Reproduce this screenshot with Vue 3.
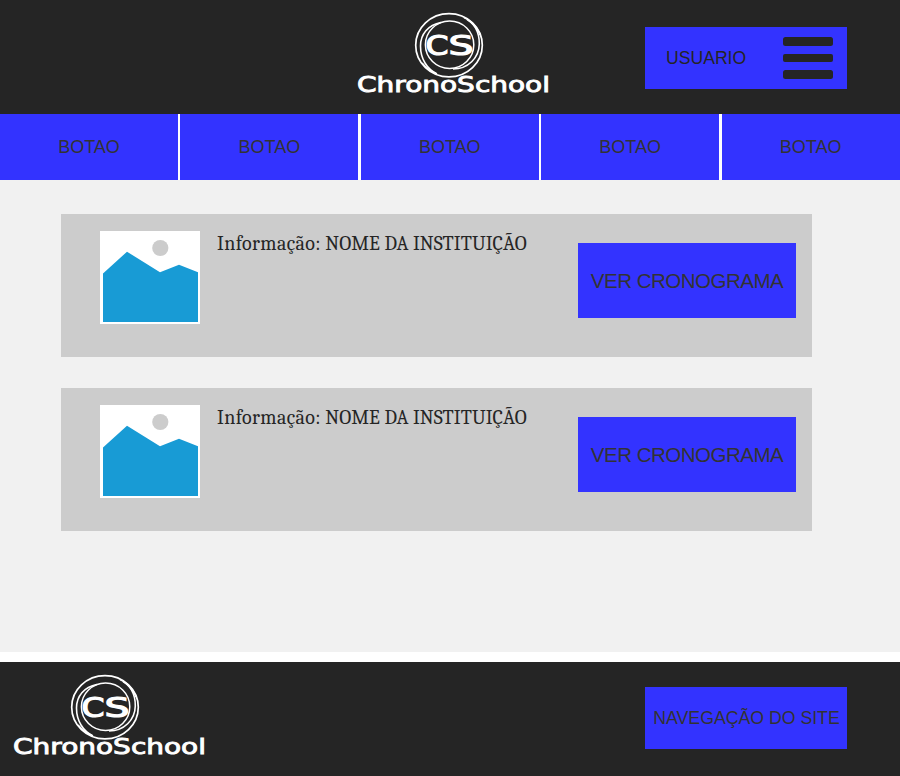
<script setup>
import { h } from 'vue'

const tabs = ['BOTAO', 'BOTAO', 'BOTAO', 'BOTAO', 'BOTAO']
const institutions = [
  { id: 1, name: 'NOME DA INSTITUIÇÃO' },
  { id: 2, name: 'NOME DA INSTITUIÇÃO' },
]

const ring = (cx, cy, rx, ry, w) =>
  h('ellipse', { cx, cy, rx, ry, fill: 'none', stroke: '#fff', 'stroke-width': w })

const arc = (d, w) =>
  h('path', { d, fill: 'none', stroke: '#fff', 'stroke-width': w })

const label = (x, y, size, length, text, outline) =>
  h('text', {
    x, y, fill: '#fff', stroke: '#fff', 'stroke-width': outline, 'font-size': size,
    'font-family': '"DejaVu Sans", sans-serif',
    textLength: length, lengthAdjust: 'spacingAndGlyphs',
  }, text)

// Brand mark: interlaced rings around the initials, with the name underneath.
const BrandLogo = () =>
  h('svg', { width: 194, height: 84, viewBox: '0 0 194 84', role: 'img' }, [
    ring(92, 33.2, 33.3, 31.6, 1.7),
    ring(92.6, 32.8, 24.2, 23.7, 1.5),
    arc('M107 5.5C117 10 122.5 20 122.3 32C122 46 111 57 96 57', 1.6),
    arc('M84 10.5C71 13 63.5 22 63.5 34C63.5 47 70 57 80 62', 1.6),
    arc('M110 7.5Q119 12.5 123 23M65 51Q71 58 79 61.5', 1.5),
    label(68.5, 43, 26.5, 23, 'C', 1.2),
    label(91.5, 43, 26.5, 25, 'S', 1.2),
    label(0, 80.3, 22, 193, 'ChronoSchool', 0.9),
  ])
</script>

<template>
  <div class="page">
    <header class="bar">
      <BrandLogo class="logo" />
      <button class="box user">
        <span>USUARIO</span>
        <svg width="50" height="42" viewBox="0 0 50 42">
          <rect width="50" height="9" rx="2.5" />
          <rect y="17" width="50" height="8" rx="2" />
          <rect y="33" width="50" height="9" rx="2.5" />
        </svg>
      </button>
    </header>
    <nav class="tabs">
      <button v-for="(tab, i) in tabs" :key="i" class="tab">{{ tab }}</button>
    </nav>
    <main class="content">
      <article v-for="item in institutions" :key="item.id" class="card">
        <svg class="picture" width="100" height="93" viewBox="0 0 100 93">
          <rect width="100" height="93" fill="#fff" />
          <circle cx="60.3" cy="17" r="8.1" fill="#ccc" />
          <path d="M3 42.5 27 20.7 60 41.2 79 33.8 98 41.3V91H3Z" fill="#189bd5" />
        </svg>
        <p class="info"><span class="info-label">Informação: </span>{{ item.name }}</p>
        <button class="schedule">VER CRONOGRAMA</button>
      </article>
    </main>
    <footer class="bar foot">
      <BrandLogo class="logo" />
      <button class="box site">NAVEGAÇÃO DO SITE</button>
    </footer>
  </div>
</template>

<style>
body {
  margin: 0;
  background: #fff;
}
</style>

<style scoped>
.page {
  width: 900px;
  height: 776px;
  display: flex;
  flex-direction: column;
  overflow: hidden;
  font-family: "Liberation Sans", Arial, sans-serif;
}
button {
  border: 0;
  border-radius: 0;
  margin: 0;
  padding: 0;
  background: #33f;
  color: #333;
  font-family: inherit;
  font-size: 18px;
  white-space: nowrap;
}
.bar {
  height: 114px;
  flex: none;
  box-sizing: border-box;
  padding: 12px 53px 0 357px;
  background: #252525;
  display: flex;
  justify-content: space-between;
  align-items: flex-start;
}
.logo {
  flex: none;
  overflow: visible;
}
.box {
  width: 202px;
  height: 62px;
  margin-top: 15px;
}
.user {
  display: flex;
  align-items: center;
  justify-content: space-between;
  padding: 0 14px 0 21px;
  color: #252525;
  font-size: 17.6px;
}
.user svg {
  fill: #252525;
}
.tabs {
  display: flex;
  gap: 2.4px;
  height: 66px;
  flex: none;
}
.tab {
  flex: 0 0 178px;
}
.content {
  height: 472px;
  flex: none;
  box-sizing: border-box;
  padding: 34px 88px 0 61px;
  background: #f1f1f1;
  display: flex;
  flex-direction: column;
  gap: 31px;
}
.card {
  height: 143px;
  box-sizing: border-box;
  padding: 17px 16px 0 39px;
  background: #ccc;
  display: flex;
  align-items: flex-start;
}
.picture {
  flex: none;
}
.info {
  flex: 1;
  margin: 0 0 0 17px;
  color: #252525;
  font: 20px/25px Cambria, Caladea, "DejaVu Serif Condensed", serif;
  letter-spacing: 0.05px;
  white-space: nowrap;
}
.info-label {
  letter-spacing: 0.35px;
}
.schedule {
  width: 218px;
  height: 75px;
  margin-top: 12px;
  padding-top: 1px;
  font-size: 20.5px;
  letter-spacing: -0.5px;
}
.foot {
  margin-top: 10px;
  padding-left: 13px;
}
.foot .box {
  margin-top: 13px;
}
.site {
  padding-left: 1px;
  font-size: 17.7px;
}
</style>
